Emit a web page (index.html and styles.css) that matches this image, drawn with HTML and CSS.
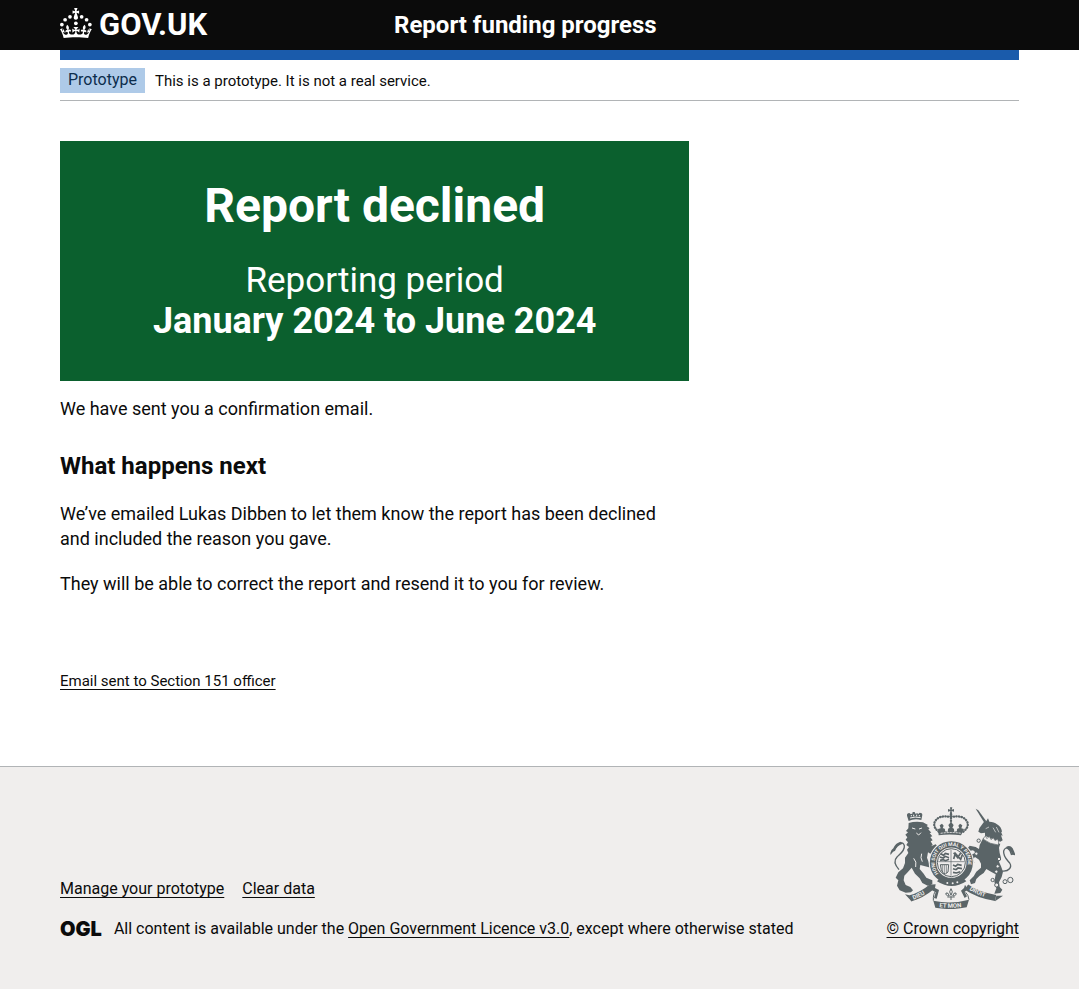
FILE: index.html
```html
<!DOCTYPE html>
<html lang="en">
<head>
<meta charset="utf-8">
<meta name="viewport" content="width=device-width, initial-scale=1">
<title>Report declined - Report funding progress - GOV.UK</title>
<link rel="stylesheet" href="styles.css">
</head>
<body>
<header class="header">
  <div class="container header-row">
    <a class="logo" href="#" aria-label="GOV.UK">
      <svg class="logo-crown" viewBox="0 0 64 60" aria-hidden="true" fill="currentColor">
        <circle cx="20" cy="17.6" r="3.7"/><circle cx="10.2" cy="23.5" r="3.7"/><circle cx="3.7" cy="33.2" r="3.7"/><circle cx="31.7" cy="30.6" r="3.7"/><circle cx="43.3" cy="17.6" r="3.7"/><circle cx="53.2" cy="23.5" r="3.7"/><circle cx="59.7" cy="33.2" r="3.7"/>
        <path d="M33.1,9.8c.2-.1.3-.3.5-.5l4.6,2.4v-6.8l-4.6,1.5c-.1-.2-.3-.3-.5-.5l1.9-5.9h-6.7l1.9,5.9c-.2.1-.3.3-.5.5l-4.6-1.5v6.8l4.6-2.4c.1.2.3.3.5.5l-2.6,8c-.9,2.8,1.2,5.7,4.1,5.7h0c3,0,5.1-2.9,4.1-5.7l-2.6-8ZM37,37.9s-3.4,3.8-4.1,6.1c2.2,0,4.2-.5,6.4-2.8l-.7,8.5c-2-2.8-4.4-4.1-5.7-3.8.1,3.1.5,6.7,5.8,7.2,3.7.3,6.7-1.5,7-3.8.4-2.6-2-4.3-3.7-1.6-1.4-4.5,2.4-6.1,4.9-3.2-1.9-4.5-1.8-7.7,2.4-10.9,3,4,2.6,7.3-1.2,11.1,2.4-1.3,6.2,0,4,4.6-1.2-2.8-3.7-2.2-4.2.2-.3,1.7.7,3.7,3,4.2,1.9.3,4.7-.9,7-5.9-1.3,0-2.4.7-3.9,1.7l2.4-8c.6,2.3,1.4,3.7,2.2,4.5.6-1.6.5-2.8,0-5.3l5,1.8c-2.6,3.6-5.2,8.7-7.3,17.5-7.4-1.1-15.7-1.7-24.5-1.7h0c-8.8,0-17.1.6-24.5,1.7-2.1-8.9-4.7-13.9-7.3-17.5l5-1.8c-.5,2.5-.6,3.7,0,5.3.8-.8,1.6-2.3,2.2-4.5l2.4,8c-1.5-1-2.6-1.7-3.9-1.7,2.3,5,5.2,6.2,7,5.9,2.3-.4,3.3-2.4,3-4.2-.5-2.4-3-3.1-4.2-.2-2.2-4.6,1.6-6,4-4.6-3.7-3.7-4.2-7.1-1.2-11.1,4.2,3.2,4.3,6.4,2.4,10.9,2.5-2.8,6.3-1.3,4.9,3.2-1.8-2.7-4.1-1-3.7,1.6.3,2.3,3.3,4.1,7,3.8,5.4-.5,5.7-4.2,5.8-7.2-1.3-.2-3.7,1-5.7,3.8l-.7-8.5c2.2,2.3,4.2,2.7,6.4,2.8-.7-2.3-4.1-6.1-4.1-6.1h10.6Z"/>
      </svg>
      <span class="logo-text">GOV.UK</span>
    </a>
    <a class="service-name" href="#">Report funding progress</a>
  </div>
</header>
<div class="container">
  <div class="phase-banner">
    <strong class="tag">Prototype</strong>
    <span class="small">This is a prototype. It is not a real service.</span>
  </div>
  <main class="main">
    <div class="column">
      <div class="panel">
        <h1 class="panel-title">Report declined</h1>
        <div class="panel-body">Reporting period <strong class="panel-period">January 2024 to June 2024</strong></div>
      </div>
      <p class="body">We have sent you a confirmation email.</p>
      <h2 class="heading">What happens next</h2>
      <p class="body">We’ve emailed Lukas Dibben to let them know the report has been declined<br>and included the reason you gave.</p>
      <p class="body">They will be able to correct the report and resend it to you for review.</p>
    </div>
    <p class="email-link small"><a class="link" href="#">Email sent to Section 151 officer</a></p>
  </main>
</div>
<footer class="footer">
  <div class="container footer-row">
    <div class="footer-meta">
      <ul class="footer-links">
        <li><a class="link" href="#">Manage your prototype</a></li>
        <li><a class="link" href="#">Clear data</a></li>
      </ul>
      <div class="licence">
        <span class="ogl">OGL</span>
        <span>All content is available under the <a class="link" href="#">Open Government Licence v3.0</a>, except where otherwise stated</span>
      </div>
    </div>
    <a class="copyright" href="#">
      <svg class="arms" viewBox="33 20 375 306" aria-hidden="true">
        <defs>
          <path id="garter" d="M179 219A50 50 0 1 1 255 219"/>
          <path id="scroll-left" d="M104 298Q132 288 164 262"/>
          <path id="scroll-mid" d="M181 320Q216 326 268 317"/>
          <path id="scroll-right" d="M271 268Q298 287 350 299"/>
        </defs>

        <!-- lion -->
        <g fill="#5a6467">
          <path d="M89 62L84 46q-1-8 7-8l4 3 5-1 1-5h6l2 5 6-1 3 2 4-4q8 0 8 7l-3 15q-22-5-38 3z"/>
          <path d="M89 68Q110 62 132 66L140 70 147 74 143 77 152 84 148 87 157 97 152 98 160 108 154 110 161 120 155 123 161 133 156 138 170 132 178 141 166 156 154 160 147 156 144 172 150 188 165 186 168 196 156 202 138 198 124 194 122 206 134 220 142 232 160 240 160 252 146 256 130 248 122 234 108 220 98 202 86 216 76 226 74 240 80 254 94 260 102 270 96 276 80 277 62 270 54 256 58 240 50 232 58 216 72 204 78 188 78 172 88 158 84 148 90 140 82 134 87 126 80 118 85 111 79 103 87 96 81 92 88 84z"/>
        </g>
        <g fill="none" stroke="#f0eeed" stroke-width="3"><path d="M93 53q15-5 32-1M97 44v4M104 43v5M113 43v5M121 44v4M99 83l10 3M120 86l9-3M112 98l7 6 7-7M104 174q10 10 6 26M128 160q-5 12 2 24"/></g>
        <path d="M60 208C46 192 44 180 54 170 66 158 78 150 76 136 72 120 56 128 46 148" fill="none" stroke="#5a6467" stroke-width="4"/>
        <path d="M35 164q-4-12 8-20 6-16 22-20l6 6q-18 6-23 22-6 0-13 12z" fill="#5a6467"/>

        <!-- unicorn -->
        <path d="M290 25l8 5 24 33-6 4z" fill="#5a6467"/>
        <g fill="#5a6467">
          <path d="M314 66L322 62 327 54 331 64Q346 64 354 72 368 80 369 96L366 94 371 106 366 105 371 120 364 124 330 112 318 106 318 97 306 99 298 94 301 84z"/>
          <path d="M313 112L332 122 350 129 364 130 360 142 362 158 366 172 360 184 366 198 372 214 368 230 360 246 362 260 370 268 364 278 346 280 352 264 346 244 350 222 336 214 322 206 314 218 302 226 292 236 288 248 276 252 272 240 284 228 292 214 306 202 306 190 300 178 288 170 282 176 286 188 276 184 272 172 278 162 292 158 282 150 270 152 264 146 272 136 290 140 300 146 302 134z"/>
        </g>
        <path d="M370 212C390 214 400 200 392 188 382 176 372 168 374 152 380 134 394 146 398 164" fill="none" stroke="#5a6467" stroke-width="4"/>
        <path d="M381 140q12-8 20 4 4 8 9 22-8-4-11-2-2-14-14-18z" fill="#5a6467"/>
        <path d="M312 116l7-9 5 8 7-7 5 10 7-6 5 9 8-5 3 9-1 9q-26-2-46-18z" fill="#f0eeed" stroke="#5a6467" stroke-width="2"/>
        <path d="M320 85l10-5M342 82l8 14M352 80l8 16" stroke="#f0eeed" stroke-width="2"/>
        <g fill="#f0eeed" stroke="#5a6467" stroke-width="3"><circle cx="299" cy="121" r="5"/><circle cx="292" cy="160" r="5"/><circle cx="360" cy="176" r="5"/><circle cx="356" cy="198" r="5"/><circle cx="352" cy="214" r="5"/><circle cx="341" cy="239" r="5"/><circle cx="353" cy="254" r="6"/><circle cx="378" cy="244" r="6"/><circle cx="394" cy="239" r="8"/></g>

        <!-- crown -->
        <g fill="#5a6467">
          <path d="M213 21h7l-2 7 7-2v8l-7-2 2 12h-8l2-12-7 2v-8l7 2z"/>
          <circle cx="216" cy="48" r="5"/>
          <path d="M177 86l8-2-3-9 7-5 5 6-3 8q9-1 7 9l9 1q-2-10 5-11l-4-9 8-8 8 8-4 9q7 1 5 11l9-1q-2-10 7-9l-3-8 5-6 7 5-3 9 8 2-9 19q-34-5-67 0z"/>
        </g>
        <path d="M179 94q-19-15-11-31 12-20 45-13M253 94q19-15 11-31-12-20-45-13M216 53v23" fill="none" stroke="#5a6467" stroke-width="7" stroke-linecap="round" stroke-dasharray="1 7"/>
        <path d="M185 99q31-5 62 0" fill="none" stroke="#f0eeed" stroke-width="3" stroke-dasharray="6 3"/>

        <!-- garter and shield -->
        <circle cx="217" cy="187" r="68" fill="#f0eeed"/>
        <circle cx="217" cy="187" r="55" fill="none" stroke="#5a6467" stroke-width="19"/>
        <text class="motto"><textPath href="#garter">HONI SOIT QUI MAL Y PENSE</textPath></text>
        <circle cx="217" cy="187" r="42" fill="#f0eeed" stroke="#5a6467" stroke-width="3"/>
        <path d="M178 184h78M216 148v78" stroke="#5a6467" stroke-width="2"/>
        <g fill="none" stroke="#5a6467" stroke-width="5"><path d="M185 160l9 5 5-6 11 3M182 170l11 3 6-5 11 4M183 180l9-2 8 3 10-4M224 157l12 15 9-14M224 176l5-17 16 18 5-14M222 194l8 4 6-6 12 3M222 205l9 3 6-5 12 2M222 216l10 2 12-4"/></g>
        <path d="M184 193h25l-2 22q-8 9-14 4-8-9-9-26z" fill="none" stroke="#5a6467" stroke-width="3"/>
        <path d="M190 194v21M196 194v26M202 194v25" stroke="#5a6467" stroke-width="2"/>
        <path d="M181 235q34 22 72-1l9 9q-44 28-88 0z" fill="#5a6467"/>
        <g fill="#f0eeed"><circle cx="205" cy="248" r="3"/><circle cx="221" cy="249" r="3"/><circle cx="235" cy="246" r="3"/></g>

        <!-- motto scroll -->
        <path d="M78 282l22 5-4 14zM352 286l20 0-24 17zM150 253l20-1-2 11 12 6-7 26-8-2 5-17-12-7zM258 253l8 14-9 8 7 13-7 5-11-22 9-8z" fill="#5a6467"/>
        <path d="M94 294Q128 285 160 258M262 260Q296 284 350 293" fill="none" stroke="#5a6467" stroke-width="19"/>
        <path d="M163 301q53 12 107-3l-7 23q-46 10-94 1z" fill="#5a6467"/>
        <path d="M163 301q-1-22 8-30M270 298q-2-15-10-22" stroke="#5a6467" stroke-width="3" fill="none"/>
        <path d="M216 265q-8 9 0 20 8-11 0-20zM210 287q-11-1-9-9 7-3 10 9M222 287q11-1 9-9-7-3-10 9M205 290h22M216 288v11" stroke="#5a6467" stroke-width="3" fill="none"/>
        <g class="scroll-text"><text><textPath href="#scroll-left">DIEU</textPath></text><text><textPath href="#scroll-mid">ET MON</textPath></text><text><textPath href="#scroll-right">DROIT</textPath></text></g>
      </svg>
      <span class="link">© Crown copyright</span>
    </a>
  </div>
</footer>
</body>
</html>
```
FILE: styles.css
```css
* { box-sizing: border-box; }
html { height: 100%; }
body {
  margin: 0;
  min-height: 100%;
  display: flex;
  flex-direction: column;
  font-family: Roboto, "Liberation Sans", sans-serif;
  font-size: 16px;
  line-height: 20px;
  color: #0b0b0b;
  background: #fff;
}
h1, h2, p, ul { margin: 0; padding: 0; }
.container {
  width: calc(100% - 120px);
  max-width: 960px;
  margin: 0 auto;
}
.header { height: 50px; background: #0b0b0b; color: #fff; }
.header-row {
  display: grid;
  grid-template-columns: 334px 1fr;
  align-items: center;
  height: 60px;
  border-bottom: 10px solid #1a5bab;
}
.logo {
  display: flex;
  align-items: center;
  gap: 7px;
  color: #fff;
  text-decoration: none;
}
.logo-crown { width: 32px; height: 30px; margin-bottom: 5px; }
.logo-text { font-size: 31px; line-height: 30px; font-weight: 700; }
.service-name {
  font-size: 24px;
  line-height: 30px;
  font-weight: 700;
  color: #fff;
  text-decoration: none;
}
.phase-banner {
  display: flex;
  align-items: center;
  gap: 10px;
  margin-top: 10px;
  padding: 8px 0 7px;
  border-bottom: 1px solid #b1b4b6;
}
.tag {
  padding: 2px 8px 3px;
  font-weight: 400;
  color: #0c2d4c;
  background: #aecae8;
}
.small { font-size: 15px; }
.main { padding: 40px 0 75px; }
.column { width: calc(66.67% - 10px); }
.panel {
  margin-bottom: 15px;
  padding: 40px;
  color: #fff;
  background: #0b602e;
  text-align: center;
}
.panel-title { margin-bottom: 30px; font-size: 48px; line-height: 50px; font-weight: 700; }
.panel-body { font-size: 35px; line-height: 40px; }
.panel-period { display: block; font-size: 36px; }
.body { margin-bottom: 20px; font-size: 18px; line-height: 25px; }
.heading { margin: 30px 0 20px; font-size: 24px; line-height: 30px; font-weight: 700; }
.email-link { margin-top: 75px; }
.link {
  color: #0b0b0b;
  text-decoration: underline;
  text-decoration-thickness: 1px;
  text-underline-offset: 3px;
}
.footer {
  flex: 1;
  padding: 40px 0;
  background: #f0eeed;
  border-top: 1px solid #b1b4b6;
}
.footer-row { display: flex; align-items: flex-end; justify-content: space-between; }
.footer-links { display: flex; gap: 18px; margin-bottom: 20px; list-style: none; }
.licence { display: flex; align-items: center; gap: 12px; }
.ogl { font-family: Inter, sans-serif; font-size: 20px; font-weight: 900; }
.copyright {
  display: flex;
  flex-direction: column;
  align-items: center;
  gap: 10px;
  text-decoration: none;
}
.arms { width: 125px; height: 102px; }
.motto { font: 700 15px Roboto, sans-serif; fill: #f0eeed; }
.scroll-text { font: 700 18px Roboto, sans-serif; fill: #f0eeed; }
```
